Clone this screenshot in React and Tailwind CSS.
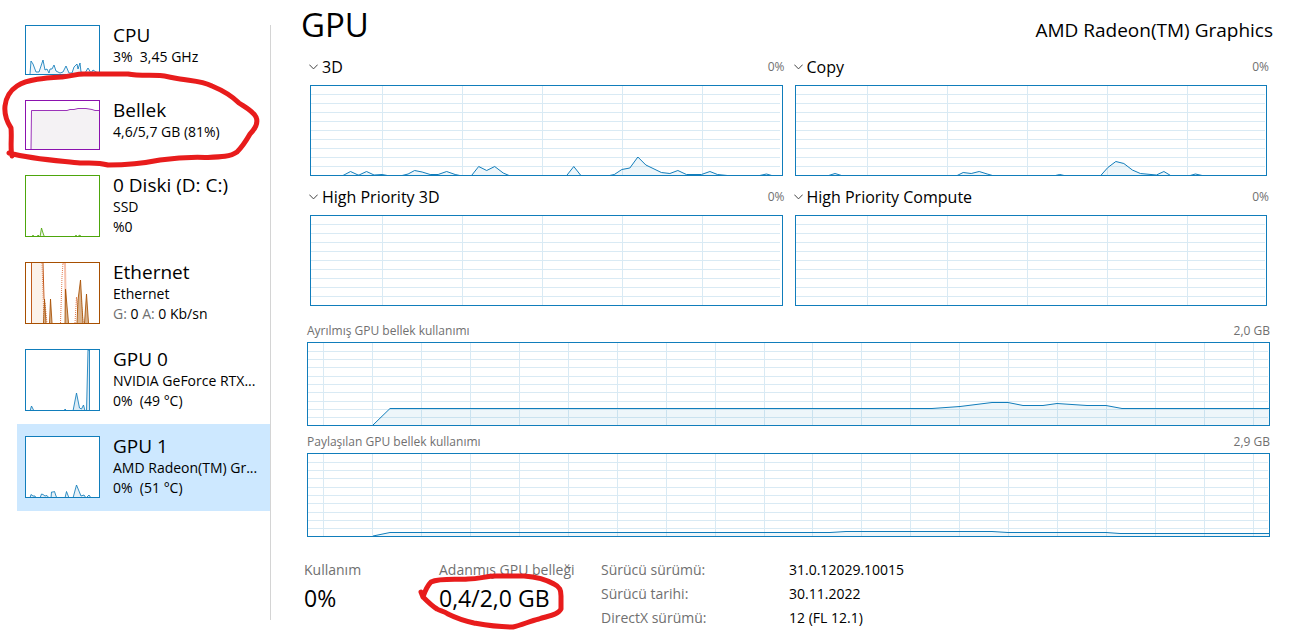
import React, { useState } from "react";

const BLUE = "#117dbb";

const devices = [
  {
    id: "cpu",
    title: "CPU",
    lines: ["3%  3,45 GHz"],
    color: BLUE,
    fill: "#f1f6fa",
    points:
      "4,48 5,35 7,38 10,46 13,46 14,43 17,34 19,44 21,43 23,47 24,43 26,43 28,39 30,45 34,47 37,46 40,40 43,47 46,47 48,41 51,38 52,43 54,37 55,46 59,47 62,42 65,47 67,44 70,46 73,47",
  },
  {
    id: "memory",
    title: "Bellek",
    lines: ["4,6/5,7 GB (81%)"],
    color: "#8b12ae",
    fill: "#f4f2f4",
    points: "5,48 5.5,9.5 41,9.5 44,8.5 48,8.5 52,7.5 60,7.5 66,8.5 69,9.5 73,9.5",
    circled: true,
  },
  {
    id: "disk",
    title: "0 Diski (D: C:)",
    lines: ["SSD", "%0"],
    color: "#4da60c",
    fill: "#eef7e8",
    points: "6,61 7,59 8,61 11,61 12,59 14,61 15.5,52 17,57 18.5,61 49,61 50,59 51,61 54,59 55,61",
  },
  { id: "ethernet", title: "Ethernet", lines: ["Ethernet"], color: "#a74f01" },
  {
    id: "gpu0",
    title: "GPU 0",
    lines: ["NVIDIA GeForce RTX...", "0%  (49 °C)"],
    color: BLUE,
    fill: "#dcebf5",
    points:
      "4,61 5.5,56 8,61 38,61 39,59 41,61 47,61 50.5,43 53.5,58 55.5,59 57.5,55 59,61 60.5,61 62,0 63.5,0 63.5,61",
  },
  {
    id: "gpu1",
    title: "GPU 1",
    lines: ["AMD Radeon(TM) Gr...", "0%  (51 °C)"],
    color: BLUE,
    fill: "#e6f0f7",
    points:
      "4,61 5,57.5 7,59 9,59 10,61 14,61 15.5,57 17,57.5 19,59 21,58.5 23,61 25,61 25.5,55 27,55 28.5,54.5 30,59 31,61 39,61 40.5,54.5 43,61 47,61 50.5,48 55,59 58,58 60,61 63,58 65,61 71,61",
  },
];

const engines = [
  {
    name: "3D",
    points:
      "31,90 39.5,85.5 47,89 48,89 55.5,85.5 63,89 71,88.5 79,90 89,90 97,88 103.5,84.5 111,86 119,88.5 127,88.5 135.5,85.5 144,88.5 151,90 160,90 167.5,80.5 175.5,84.5 183.5,80.5 192,87 199,90 255,90 262.5,80.5 270,90 296,90 303,88.5 310.5,83.5 318.5,82 326.5,71 334.5,79 350,86.5 358.5,87.5 366.5,84.5 375,88.5 390,88.5 398.5,85.5 406,88.5 421,90 446,90 455,88 462,90",
  },
  {
    name: "Copy",
    points:
      "31,90 39,87.5 47,90 160,90 167,86.5 175,87.5 183,85.5 191,88 198,90 257,90 263.5,88.5 270,90 304,90 311.5,81.5 319.5,75.5 327.5,77.5 336,84 344,87.5 360,89 367.5,85.5 375,90 392,90 399,88 408,90",
  },
  { name: "High Priority 3D" },
  { name: "High Priority Compute" },
];

const memoryCharts = [
  {
    name: "Ayrılmış GPU bellek kullanımı",
    max: "2,0 GB",
    points:
      "65,82 82,65.5 624,65.5 652,63.5 684,59.5 700,59.5 715,62.5 735,62.5 749,60.5 779,62.5 798,62.5 814,65.5 961,65.5",
  },
  {
    name: "Paylaşılan GPU bellek kullanımı",
    max: "2,9 GB",
    points: "65,82 82,78.5 522,78.5 538,77.5 684,77.5 700,78.5 798,78.5 812,79.5 961,79.5",
  },
];

const driverInfo = [
  ["Sürücü sürümü:", "31.0.12029.10015"],
  ["Sürücü tarihi:", "30.11.2022"],
  ["DirectX sürümü:", "12 (FL 12.1)"],
];

const engineCols = [71, 151, 231, 311, 391];
const engineRows = [8, 17, 26, 35, 44, 53, 62, 71, 80];
const memoryCols = [15, 64, 113, 162, 211, 260, 309, 358, 407, 456, 504, 553, 602, 651, 700, 749, 798, 847, 896, 945];
const memoryRows = [8, 16, 24, 33, 41, 49, 58, 66, 74];

// closes the line down to the base of the chart
const area = (points, height) => {
  const list = points.split(" ");
  const firstX = list[0].split(",")[0];
  const lastX = list[list.length - 1].split(",")[0];
  return `${firstX},${height} ${points} ${lastX},${height}`;
};

const Chart = ({ width, height, cols, rows, points, className }) => (
  <svg
    viewBox={`0 0 ${width} ${height}`}
    preserveAspectRatio="none"
    className={`block w-full border border-[#117dbb] bg-white ${className}`}
  >
    <g stroke="#d9eaf4" shapeRendering="crispEdges">
      {cols.map((x) => (
        <line key={x} x1={x + 0.5} x2={x + 0.5} y1="0" y2={height} vectorEffect="non-scaling-stroke" />
      ))}
      {rows.map((y) => (
        <line key={y} x1="0" x2={width - 1} y1={y + 0.5} y2={y + 0.5} vectorEffect="non-scaling-stroke" />
      ))}
    </g>
    {points && (
      <>
        <polygon points={area(points, height)} fill={BLUE} fillOpacity="0.07" />
        <polyline points={points} fill="none" stroke={BLUE} vectorEffect="non-scaling-stroke" />
      </>
    )}
  </svg>
);

const EthernetGraph = () => (
  <>
    <rect x="5" y="0" width="12" height="60" fill="#fbf2ea" />
    <path d="M5.5 0V60M17 0L18 36" fill="none" stroke="#c05a1c" />
    <path d="M16 0L18 60" fill="none" stroke="#e58a62" strokeDasharray="1 1" />
    <path d="M39 0L40 60M36.5 0H39" fill="none" stroke="#f5c0ac" strokeWidth="2" />
    <path d="M34.5 60L36 14L37 0M49 60L50.5 34L53 60M19 40L21 60M55 36L57 60" fill="none" stroke="#e07a50" strokeDasharray="1 1" />
    <g fill="#d9b48f" stroke="#a74f01" strokeOpacity="0.85">
      <path d="M17.5 60L18.5 36L20 60" />
      <path d="M23.5 60L24.5 36L26 60" />
      <path d="M39 60L39.5 26L42.5 60" />
      <path d="M51 60L52 37L54.5 17L57 60" />
      <path d="M58.5 60L60.5 31L62.5 60" />
    </g>
  </>
);

const DeviceItem = ({ device, selected, onSelect }) => {
  const { id, title, lines, color, fill, points, circled } = device;
  const small = id === "cpu" || id === "memory";
  const height = small ? 48 : 60;

  return (
    <button
      type="button"
      onClick={() => onSelect(id)}
      className={`relative flex w-full items-start gap-[13px] pt-3 pb-[13px] pl-2 text-left ${
        selected ? "bg-[#cde8ff]" : ""
      }`}
    >
      <svg
        viewBox={`0 0 73 ${height}`}
        className={`block w-[75px] shrink-0 border bg-white ${small ? "h-[50px]" : "h-[62px]"}`}
        style={{ borderColor: color }}
      >
        {id === "ethernet" ? (
          <EthernetGraph />
        ) : (
          <>
            <polygon points={area(points, height)} fill={fill} />
            <polyline points={points} fill="none" stroke={color} strokeOpacity="0.85" />
          </>
        )}
      </svg>
      <span className="block min-w-0">
        <span className="mb-0.5 block text-[19px] leading-5">{title}</span>
        {lines.map((line) => (
          <span key={line} className="block text-sm leading-5 whitespace-pre">
            {line}
          </span>
        ))}
        {id === "ethernet" && (
          <span className="block text-sm leading-5">
            <span className="text-[#707070]">G:</span> 0 <span className="text-[#707070]">A:</span> 0 Kb/sn
          </span>
        )}
      </span>
      {circled && (
        <svg
          viewBox="0 70 264 100"
          className="pointer-events-none absolute -top-[18px] -left-[17px] z-10 h-[100px] w-[264px]"
          fill="none"
          stroke="#e81c1c"
          strokeWidth="5"
          strokeLinecap="round"
          strokeLinejoin="round"
        >
          <path d="M12 156C10 148 12 138 11 128C7 122 4 116 5 106C6 97 11 90 17 86C28 79 46 78 62 77C72 76 76 74 84 74H128C137 76 150 75 160 75.500C167 76 172 78 180 79C192 81 202 81 212 86C224 91 232 96 239 103C245 107 253 111 256 117C259 124 254 130 250 134C246 141 242 147 237 152C230 157 220 157 205 157.500C190 157 175 158 160 160C145 163 125 165 108 165C98 162 90 163 80 163C65 161 35 160 9 153" />
        </svg>
      )}
    </button>
  );
};

const EngineChart = ({ name, points }) => (
  <section>
    <div className="-mr-0.5 flex h-5 items-center justify-between">
      <button type="button" className="flex items-center gap-1 text-base leading-5">
        <svg viewBox="0 0 9 6" className="-ml-px h-1.5 w-[9px]" fill="none" stroke="#444444">
          <path d="M0.300 0.600L4.500 4.900L8.700 0.600" />
        </svg>
        {name}
      </button>
      <span className="text-xs leading-[18px] text-[#707070]">0%</span>
    </div>
    <Chart
      width={470}
      height={89}
      cols={engineCols}
      rows={engineRows}
      points={points}
      className="mt-2 h-[91px]"
    />
  </section>
);

const App = () => {
  const [selected, setSelected] = useState("gpu1");

  return (
    <div className="flex min-h-screen bg-white font-['Open_Sans','Noto_Sans',sans-serif] text-black">
      <nav className="w-[270px] shrink-0 pt-[13px] pl-[17px]">
        {devices.map((device) => (
          <DeviceItem
            key={device.id}
            device={device}
            selected={device.id === selected}
            onSelect={setSelected}
          />
        ))}
      </nav>
      <div className="mt-[25px] mb-3 w-px shrink-0 bg-[#d4d4d4]" />

      <main className="min-w-0 flex-1">
        <header className="flex items-baseline justify-between pt-[5px] pr-5 pl-[30px]">
          <h1 className="text-[33px] leading-10">GPU</h1>
          <h2 className="text-[19px] leading-6">AMD Radeon(TM) Graphics</h2>
        </header>

        <div className="mt-3 grid grid-cols-2 gap-x-3 gap-y-[11px] pr-[26px] pl-[39px]">
          {engines.map((engine) => (
            <EngineChart key={engine.name} name={engine.name} points={engine.points} />
          ))}
        </div>

        <div className="mt-4 flex flex-col gap-[7px] pr-[23px] pl-9">
          {memoryCharts.map((chart) => (
            <section key={chart.name}>
              <div className="flex justify-between text-xs leading-[18px] text-[#707070]">
                <span>{chart.name}</span>
                <span>{chart.max}</span>
              </div>
              <Chart
                width={961}
                height={82}
                cols={memoryCols}
                rows={memoryRows}
                points={chart.points}
                className="mt-0.5 h-[84px]"
              />
            </section>
          ))}
        </div>

        <div className="mt-[21px] flex pl-[33px]">
          <div className="w-[135px]">
            <div className="text-sm leading-6 text-[#707070]">Kullanım</div>
            <div className="text-[23px] leading-8">0%</div>
          </div>
          <div className="relative w-[162px]">
            <div className="text-sm leading-6 whitespace-nowrap text-[#707070]">Adanmış GPU belleği</div>
            <div className="text-[23px] leading-8">0,4/2,0 GB</div>
            <svg
              viewBox="415 570 154 62"
              className="pointer-events-none absolute top-3 -left-6 h-[62px] w-[154px]"
              fill="none"
              stroke="#e81c1c"
              strokeWidth="5"
              strokeLinecap="round"
              strokeLinejoin="round"
            >
              <path d="M421 592L423 597C425 591 427 586 431 582C440 578 455 580 468 579C480 579 486 576 496 576H524C537 577 547 580 554 584C560 587 561 590 561 596V609C558 615 548 616 539 619C530 621 522 625 513 627C495 627 485 625 474 623C465 621 456 618 448 614C444 611 440 611 437 609C432 606 427 601 423 597" />
            </svg>
          </div>
          <dl className="grid grid-cols-[188px_auto] text-sm leading-6">
            {driverInfo.map(([label, value]) => (
              <React.Fragment key={label}>
                <dt className="text-[#707070]">{label}</dt>
                <dd>{value}</dd>
              </React.Fragment>
            ))}
          </dl>
        </div>
      </main>
    </div>
  );
};

export default App;
